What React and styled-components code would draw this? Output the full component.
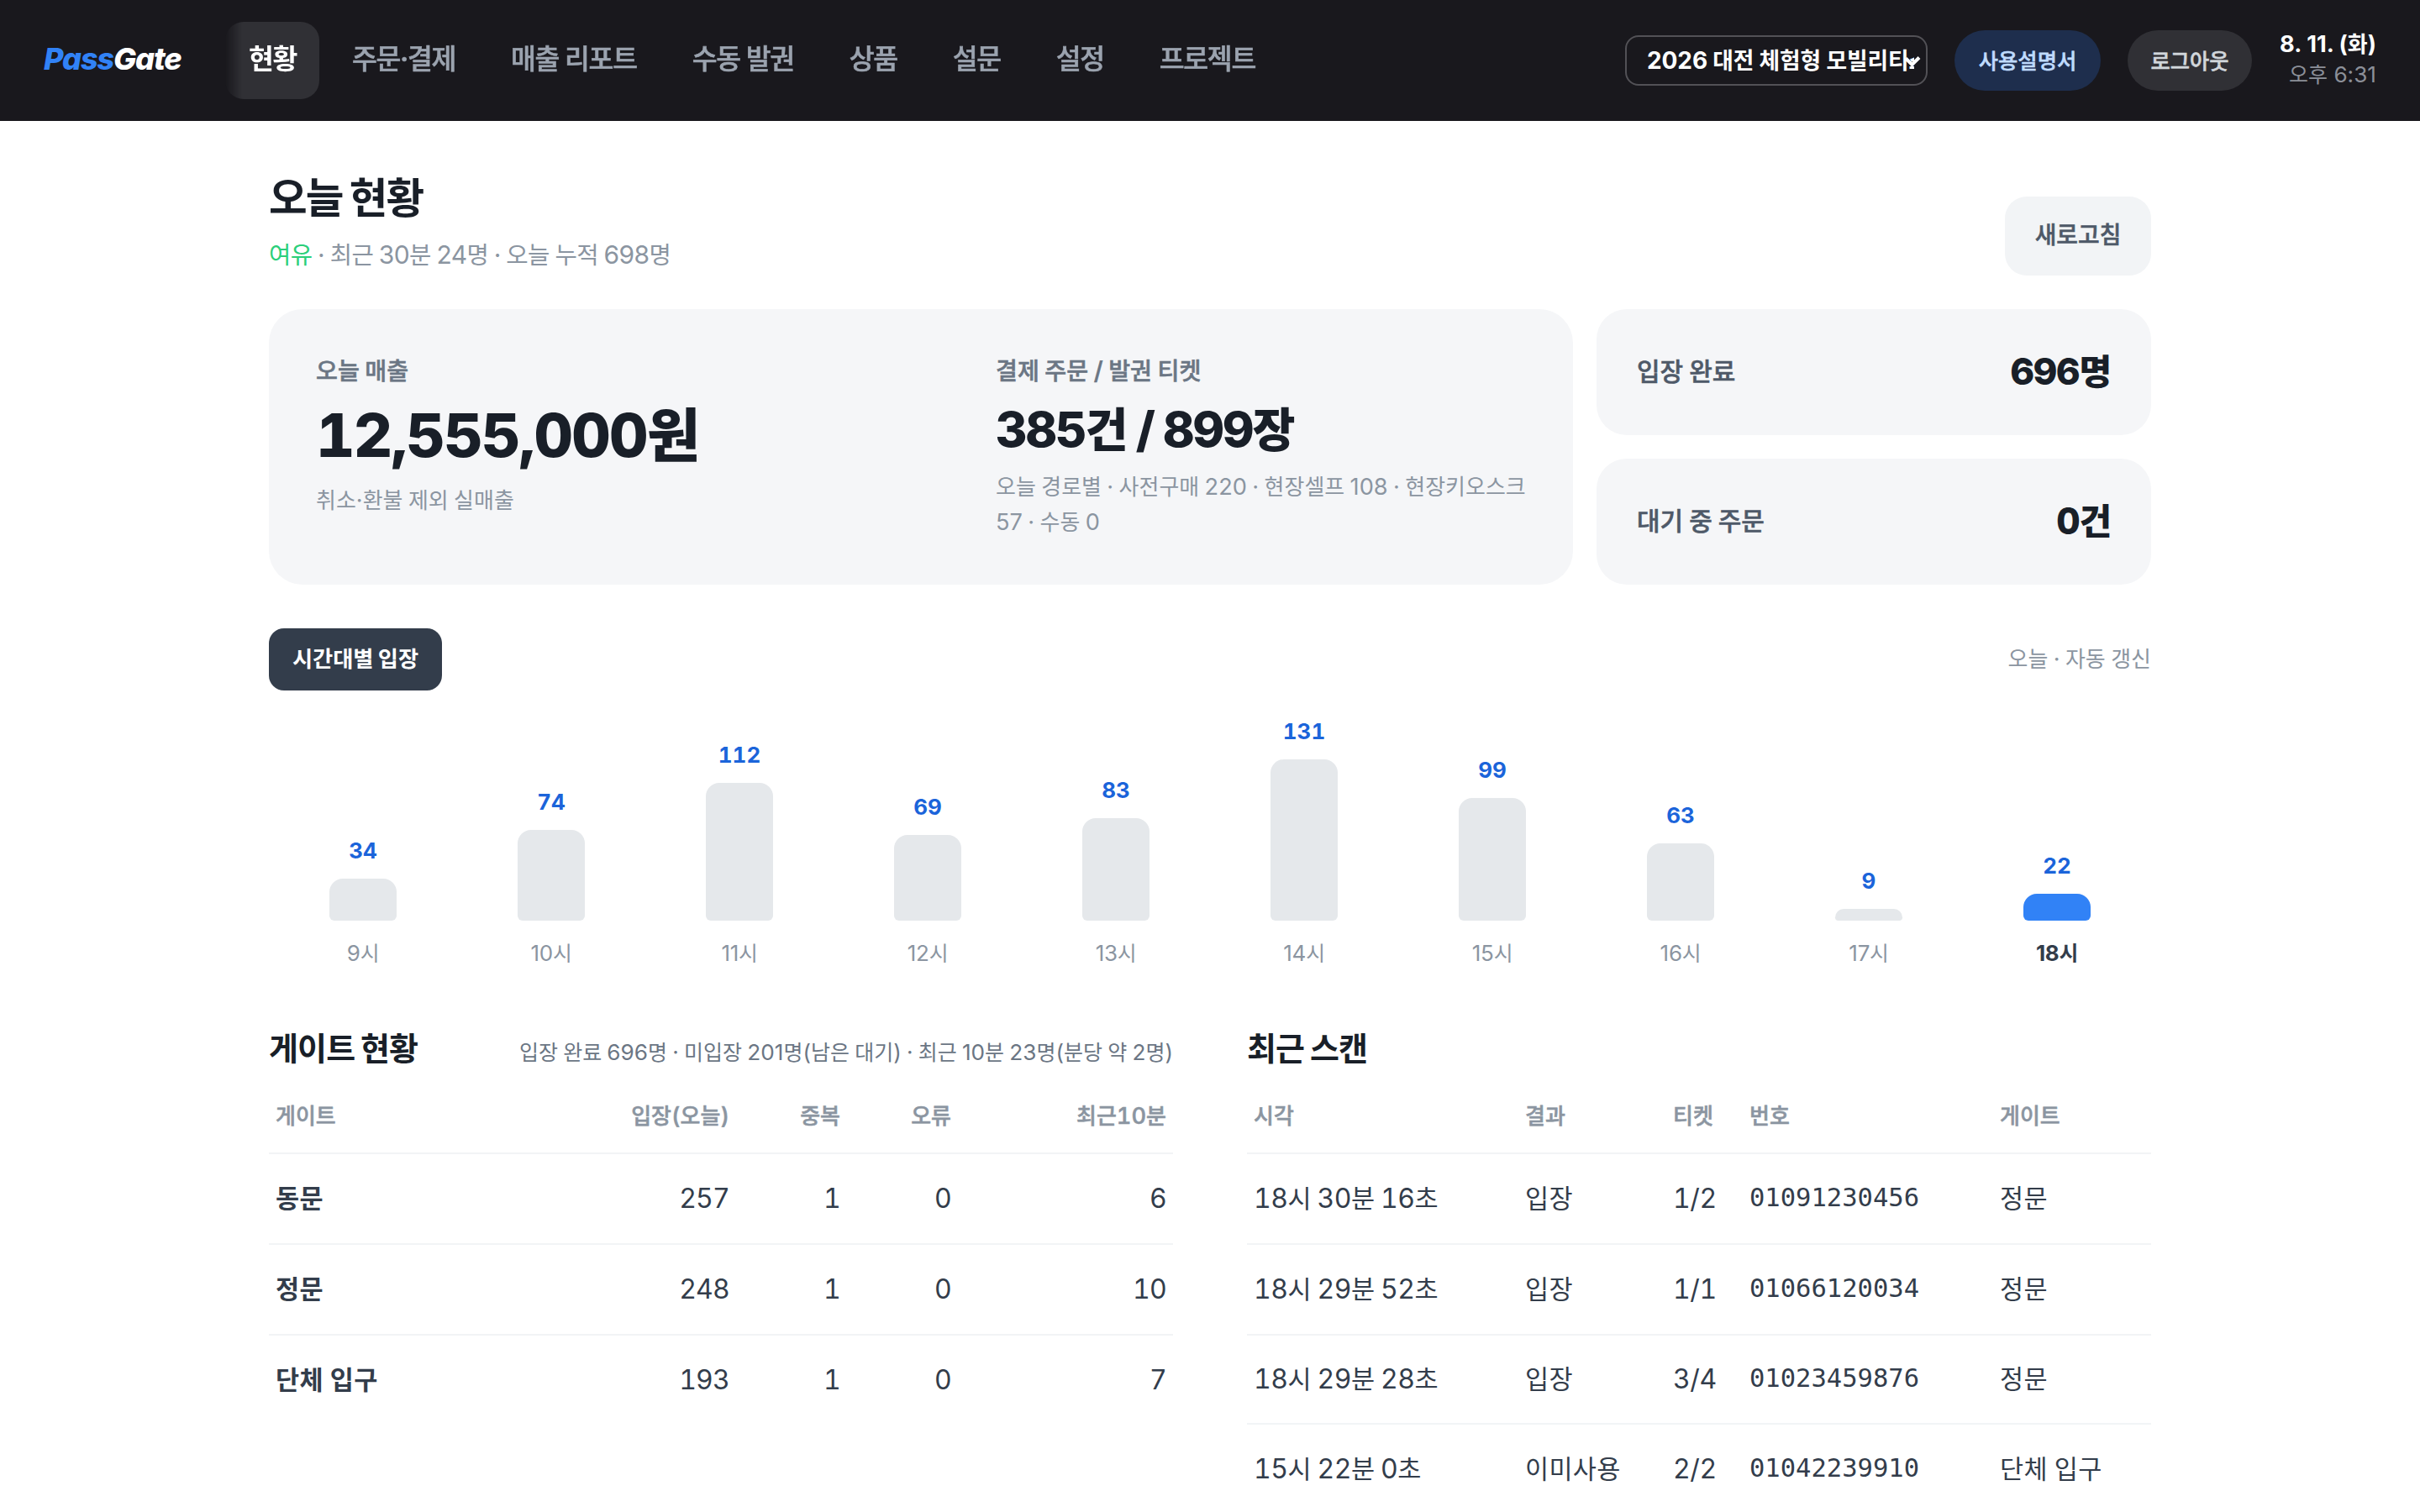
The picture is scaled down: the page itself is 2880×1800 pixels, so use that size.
import React from "react";
import styled, { createGlobalStyle, css } from "styled-components";

const GlobalStyle = createGlobalStyle`
  *, *::before, *::after { box-sizing: border-box; word-spacing: -0.045em; }
  html, body { margin: 0; padding: 0; background: #fff; }
  body {
    height: 1800px;
    overflow: hidden;
    color: #191f28;
    font-family: Inter, "Noto Sans CJK KR", sans-serif;
    -webkit-font-smoothing: antialiased;
  }
  h1, h2, p { margin: 0; }
  button { font-family: inherit; border: 0; }
`;

/* Hangul is set slightly smaller so it sits evenly beside the Latin digits. */
const Hangul = styled.span`
  font-size: 0.955em;
  line-height: 0;
`;

const ko = (text) =>
  text
    .split(/([\uac00-\ud7a3]+)/)
    .filter(Boolean)
    .map((run, i) =>
      /[\uac00-\ud7a3]/.test(run) ? <Hangul key={i}>{run}</Hangul> : run
    );

/* A semibold between the medium and bold cuts of the Korean face. */
const semibold = css`
  font-weight: 500;
  -webkit-text-stroke: 0.55px currentColor;
`;

const Header = styled.header`
  display: flex;
  align-items: center;
  height: 144px;
  padding: 0 52px;
  background: #19181d;
`;

const Logo = styled.div`
  width: 216px;
  font-size: 36px;
  font-style: italic;
  font-weight: 800;
  line-height: 44px;
  letter-spacing: -0.03em;
  color: #fff;
  padding-bottom: 4px;
`;

const LogoAccent = styled.span`
  color: #3182f6;
`;

const Nav = styled.nav`
  display: flex;
  flex: 1;
  gap: 11px;
  mask-image: linear-gradient(90deg, transparent 0, #000 20px);
`;

const NavItem = styled.a`
  height: 92px;
  padding: 0 27px 0 28px;
  border-radius: 22px;
  font-size: 34px;
  line-height: 88px;
  letter-spacing: -0.04em;
  word-spacing: -0.02em;
  white-space: nowrap;
  ${(p) => (p.$active ? "font-weight: 700;" : semibold)}
  color: ${(p) => (p.$active ? "#fff" : "#9ba3af")};
  background: ${(p) => (p.$active ? "#303035" : "transparent")};
`;

const HeaderTools = styled.div`
  display: flex;
  align-items: center;
  gap: 32px;
`;

const ProjectSelect = styled.div`
  position: relative;
  width: 360px;
  height: 60px;
  padding: 0 14px 0 24px;
  border: 2px solid #525156;
  border-radius: 16px;
  font-size: 28px;
  font-weight: 700;
  line-height: 56px;
  color: #fff;
`;

const SelectText = styled.div`
  overflow: hidden;
  letter-spacing: -0.003em;
  word-spacing: -0.01em;
  white-space: nowrap;
`;

const Chevron = styled.svg`
  position: absolute;
  right: 6px;
  top: 21px;
  width: 20px;
  height: 16px;
`;

const Pill = styled.button`
  width: ${(p) => p.$width}px;
  height: 72px;
  padding: 0;
  border-radius: 36px;
  font-size: 26.5px;
  ${semibold}
  line-height: 72px;
  white-space: nowrap;
  color: ${(p) => p.$color};
  background: ${(p) => p.$background};
`;

const Clock = styled.div`
  display: flex;
  flex-direction: column;
  align-items: flex-end;
  width: 116px;
  padding-bottom: 2px;
  white-space: nowrap;
  line-height: 36px;
`;

const ClockDate = styled.div`
  font-size: 27.2px;
  font-weight: 700;
  word-spacing: 0.01em;
  color: #fff;
`;

const ClockTime = styled.div`
  font-size: 26.2px;
  word-spacing: 0;
  color: #8b8f98;
`;

const Page = styled.main`
  width: 2240px;
  margin: 0 auto;
  padding-top: 57px;
`;

const PageHead = styled.div`
  display: flex;
  justify-content: space-between;
  align-items: flex-end;
  height: 127px;
`;

const PageTitle = styled.h1`
  font-size: 52px;
  font-weight: 700;
  line-height: 70px;
  letter-spacing: -0.036em;
`;

const PageSub = styled.p`
  margin-top: 9px;
  margin-bottom: 2px;
  font-size: 30px;
  line-height: 46px;
  letter-spacing: -0.019em;
  color: #8b95a1;
`;

const Good = styled.span`
  color: #2bcf7a;
`;

const RefreshButton = styled.button`
  width: 174px;
  height: 94px;
  padding: 0 0 3px;
  border-radius: 26px;
  font-size: 29.2px;
  ${semibold}
  color: #4e5968;
  background: #f2f4f6;
`;

const Summary = styled.section`
  display: grid;
  grid-template-columns: 1552px 660px;
  gap: 28px;
  height: 328px;
  margin-top: 40px;
`;

const SalesCard = styled.div`
  display: grid;
  grid-template-columns: 809px 631px;
  padding: 52px 56px;
  border-radius: 40px;
  background: #f5f6f8;
`;

const StatLabel = styled.div`
  font-size: 29.5px;
  ${semibold}
  line-height: 42px;
  color: #6b7684;
`;

const StatValue = styled.div`
  margin-top: ${(p) => (p.$large ? 16 : 13)}px;
  font-size: ${(p) => (p.$large ? 72 : 58)}px;
  font-weight: 800;
  line-height: ${(p) => (p.$large ? 80 : 72)}px;
  letter-spacing: ${(p) => (p.$large ? "-0.023em" : "-0.033em")};
  font-variant-numeric: tabular-nums;
  white-space: nowrap;
`;

const StatNote = styled.div`
  margin-top: ${(p) => p.$top}px;
  font-size: 27.2px;
  line-height: 42px;
  white-space: nowrap;
  color: #8b95a1;
`;

const SideStats = styled.div`
  display: grid;
  grid-template-rows: 1fr 1fr;
  gap: 28px;
`;

const SideCard = styled.div`
  display: flex;
  justify-content: space-between;
  align-items: center;
  padding: 0 48px 2px;
  border-radius: 36px;
  background: #f5f6f8;
`;

const SideLabel = styled.div`
  font-size: 31.4px;
  ${semibold}
  color: #4e5968;
`;

const SideValue = styled.div`
  font-size: 44px;
  font-weight: 800;
  letter-spacing: -0.025em;
  font-variant-numeric: tabular-nums;
`;

const ChartHead = styled.div`
  display: flex;
  justify-content: space-between;
  align-items: center;
  height: 74px;
  margin-top: 52px;
`;

const ChartTab = styled.button`
  width: 206px;
  height: 74px;
  padding: 0 0 3px;
  border-radius: 18px;
  font-size: 27.5px;
  font-weight: 700;
  color: #fff;
  background: #333d4b;
`;

const ChartHint = styled.div`
  padding-bottom: 2px;
  font-size: 27.2px;
  color: #8b95a1;
`;

const Chart = styled.section`
  display: grid;
  grid-template-columns: repeat(10, 224px);
  align-items: end;
  height: 340px;
`;

const ChartColumn = styled.div`
  display: flex;
  flex-direction: column;
  align-items: center;
`;

const BarValue = styled.div`
  margin-bottom: 16px;
  font-size: 26px;
  font-weight: 700;
  line-height: 34px;
  font-variant-numeric: tabular-nums;
  color: #1b64da;
`;

const Bar = styled.div`
  width: 80px;
  border-radius: 16px 16px 6px 6px;
  background: ${(p) => (p.$current ? "#3182f6" : "#e5e8eb")};
`;

const BarLabel = styled.div`
  height: 66px;
  padding-top: 21px;
  font-size: 26px;
  line-height: 36px;
  letter-spacing: -0.01em;
  font-weight: ${(p) => (p.$current ? 700 : 400)};
  color: ${(p) => (p.$current ? "#333d4b" : "#8b95a1")};
`;

const Panels = styled.div`
  display: grid;
  grid-template-columns: 1076px 1076px;
  gap: 88px;
`;

const PanelHead = styled.div`
  display: flex;
  justify-content: space-between;
  align-items: flex-start;
  height: 116px;
  padding-top: 62px;
`;

const PanelTitle = styled.h2`
  font-size: 39.8px;
  font-weight: 700;
  line-height: 48px;
  letter-spacing: -0.022em;
`;

const PanelNote = styled.p`
  margin-top: 11px;
  font-size: 26.2px;
  line-height: 36px;
  white-space: nowrap;
  color: #6b7684;
`;

const TableRow = styled.div`
  display: grid;
  grid-template-columns: ${(p) => p.$columns};
  align-items: center;
  height: ${(p) => p.$height}px;
  border-bottom: ${(p) => (p.$last ? 0 : "2px solid #f2f4f6")};
`;

const HeadCell = styled.div`
  padding: 6px 8px 0;
  font-size: 27.2px;
  ${semibold}
  font-variant-numeric: tabular-nums;
  text-align: ${(p) => (p.$right ? "right" : "left")};
  color: #8b95a1;
`;

const Cell = styled.div`
  padding: 0 8px;
  font-size: 32px;
  line-height: 44px;
  font-weight: ${(p) => (p.$bold ? 700 : 400)};
  font-variant-numeric: tabular-nums;
  letter-spacing: ${(p) => (p.$right ? "-0.025em" : p.$numeric ? "-0.014em" : "0.01em")};
  word-spacing: -0.03em;
  text-align: ${(p) => (p.$right ? "right" : "left")};
  white-space: nowrap;
  color: #333d4b;
`;

const CodeCell = styled(Cell)`
  padding-bottom: 2px;
  font-family: "DejaVu Sans Mono", monospace;
  font-size: 30.5px;
  letter-spacing: 0;
`;

const NAV = ["현황", "주문·결제", "매출 리포트", "수동 발권", "상품", "설문", "설정", "프로젝트"];

const HOURS = [
  [9, 34],
  [10, 74],
  [11, 112],
  [12, 69],
  [13, 83],
  [14, 131],
  [15, 99],
  [16, 63],
  [17, 9],
  [18, 22],
];
const PEAK = 131;
const CURRENT_HOUR = 18;
const barHeight = (count) => Math.round((count / PEAK) * 96) * 2;

const GATE_COLUMNS = "402px 154px 132px 132px 256px";
const GATES = [
  ["동문", "257", "1", "0", "6"],
  ["정문", "248", "1", "0", "10"],
  ["단체 입구", "193", "1", "0", "7"],
];

const SCAN_COLUMNS = "323px 176px 91px 298px 188px";
const SCANS = [
  ["18시 30분 16초", "입장", "1/2", "01091230456", "정문"],
  ["18시 29분 52초", "입장", "1/1", "01066120034", "정문"],
  ["18시 29분 28초", "입장", "3/4", "01023459876", "정문"],
  ["15시 22분 0초", "이미사용", "2/2", "01042239910", "단체 입구"],
];
const SCAN_ROW_HEIGHTS = [108, 108, 106, 108];

export default function App() {
  return (
    <>
      <GlobalStyle />
      <Header>
        <Logo>
          <LogoAccent>Pass</LogoAccent>Gate
        </Logo>
        <Nav>
          {NAV.map((name, i) => (
            <NavItem key={name} $active={i === 0}>
              {ko(name)}
            </NavItem>
          ))}
        </Nav>
        <HeaderTools>
          <ProjectSelect>
            <SelectText>{ko("2026 대전 체험형 모빌리티쇼")}</SelectText>
            <Chevron viewBox="0 0 20 16" fill="none" stroke="#fff" strokeWidth="4">
              <path d="M2 4.5 L9.5 12 L18 3.5" />
            </Chevron>
          </ProjectSelect>
          <Pill $width={174} $color="#bfdbfe" $background="#1e2e4d">
            {ko("사용설명서")}
          </Pill>
          <Pill $width={148} $color="#d1d6db" $background="#303035">
            {ko("로그아웃")}
          </Pill>
          <Clock>
            <ClockDate>{ko("8. 11. (화)")}</ClockDate>
            <ClockTime>{ko("오후 6:31")}</ClockTime>
          </Clock>
        </HeaderTools>
      </Header>
      <Page>
        <PageHead>
          <div>
            <PageTitle>{ko("오늘 현황")}</PageTitle>
            <PageSub>
              <Good>{ko("여유")}</Good>
              {ko(" · 최근 30분 24명 · 오늘 누적 698명")}
            </PageSub>
          </div>
          <RefreshButton>{ko("새로고침")}</RefreshButton>
        </PageHead>
        <Summary>
          <SalesCard>
            <div>
              <StatLabel>{ko("오늘 매출")}</StatLabel>
              <StatValue $large>{ko("12,555,000원")}</StatValue>
              <StatNote $top={17}>{ko("취소·환불 제외 실매출")}</StatNote>
            </div>
            <div>
              <StatLabel>{ko("결제 주문 / 발권 티켓")}</StatLabel>
              <StatValue>{ko("385건 / 899장")}</StatValue>
              <StatNote $top={12}>
                {ko("오늘 경로별 · 사전구매 220 · 현장셀프 108 · 현장키오스크")}
                <br />
                {ko("57 · 수동 0")}
              </StatNote>
            </div>
          </SalesCard>
          <SideStats>
            <SideCard>
              <SideLabel>{ko("입장 완료")}</SideLabel>
              <SideValue>{ko("696명")}</SideValue>
            </SideCard>
            <SideCard>
              <SideLabel>{ko("대기 중 주문")}</SideLabel>
              <SideValue>{ko("0건")}</SideValue>
            </SideCard>
          </SideStats>
        </Summary>
        <ChartHead>
          <ChartTab>{ko("시간대별 입장")}</ChartTab>
          <ChartHint>{ko("오늘 · 자동 갱신")}</ChartHint>
        </ChartHead>
        <Chart>
          {HOURS.map(([hour, count]) => (
            <ChartColumn key={hour}>
              <BarValue>{count}</BarValue>
              <Bar $current={hour === CURRENT_HOUR} style={{ height: barHeight(count) }} />
              <BarLabel $current={hour === CURRENT_HOUR}>{ko(`${hour}시`)}</BarLabel>
            </ChartColumn>
          ))}
        </Chart>
        <Panels>
          <section>
            <PanelHead>
              <PanelTitle>{ko("게이트 현황")}</PanelTitle>
              <PanelNote>
                {ko("입장 완료 696명 · 미입장 201명(남은 대기) · 최근 10분 23명(분당 약 2명)")}
              </PanelNote>
            </PanelHead>
            <TableRow $columns={GATE_COLUMNS} $height={96}>
              {["게이트", "입장(오늘)", "중복", "오류", "최근10분"].map((label, i) => (
                <HeadCell key={label} $right={i > 0}>
                  {ko(label)}
                </HeadCell>
              ))}
            </TableRow>
            {GATES.map((gate, r) => (
              <TableRow
                key={gate[0]}
                $columns={GATE_COLUMNS}
                $height={r === 2 ? 106 : 108}
                $last={r === 2}
              >
                {gate.map((value, i) => (
                  <Cell key={i} $bold={i === 0} $right={i > 0}>
                    {ko(value)}
                  </Cell>
                ))}
              </TableRow>
            ))}
          </section>
          <section>
            <PanelHead>
              <PanelTitle>{ko("최근 스캔")}</PanelTitle>
            </PanelHead>
            <TableRow $columns={SCAN_COLUMNS} $height={96}>
              {["시각", "결과", "티켓", "번호", "게이트"].map((label) => (
                <HeadCell key={label}>{ko(label)}</HeadCell>
              ))}
            </TableRow>
            {SCANS.map((scan, r) => (
              <TableRow key={scan[3]} $columns={SCAN_COLUMNS} $height={SCAN_ROW_HEIGHTS[r]}>
                {scan.map((value, i) =>
                  i === 3 ? (
                    <CodeCell key={i}>{value}</CodeCell>
                  ) : (
                    <Cell key={i} $numeric={/\d/.test(value)}>
                      {ko(value)}
                    </Cell>
                  )
                )}
              </TableRow>
            ))}
          </section>
        </Panels>
      </Page>
    </>
  );
}
